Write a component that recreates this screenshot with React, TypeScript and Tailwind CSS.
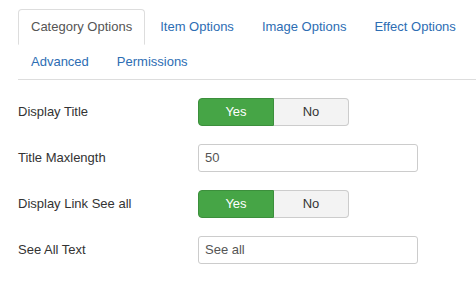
import React from 'react';

const tabsRow1 = ['Category Options', 'Item Options', 'Image Options', 'Effect Options'];
const tabsRow2 = ['Advanced', 'Permissions'];

function Tab({ label, active }: { label: string; active?: boolean }) {
  return (
    <li
      className={
        'mr-[2px] -mb-px border px-[12px] py-[8px] leading-[18px] rounded-t-[4px] ' +
        (active
          ? 'border-[#dddddd] border-b-white bg-white text-[#555555]'
          : 'border-transparent text-[#2d6db3]')
      }
    >
      {label}
    </li>
  );
}

function Toggle() {
  return (
    <div className="flex h-[28px]">
      <span className="flex w-[76px] items-center justify-center rounded-l-[4px] border border-[#3c8f3c] bg-[#46a546] text-white">
        Yes
      </span>
      <span className="flex w-[75px] items-center justify-center rounded-r-[4px] border border-l-0 border-[#cccccc] bg-[#f3f3f3] text-[#333333]">
        No
      </span>
    </div>
  );
}

function Field({ value }: { value: string }) {
  return (
    <div className="flex h-[28px] w-[220px] items-center rounded-[3px] border border-[#cccccc] bg-white px-[6px] text-[#555555]">
      {value}
    </div>
  );
}

const rows: { label: string; kind: 'toggle' | 'text'; value?: string }[] = [
  { label: 'Display Title', kind: 'toggle' },
  { label: 'Title Maxlength', kind: 'text', value: '50' },
  { label: 'Display Link See all', kind: 'toggle' },
  { label: 'See All Text', kind: 'text', value: 'See all' },
];

export default function App() {
  return (
    <div
      className="h-[286px] w-[476px] overflow-hidden bg-white pl-[18px] pt-[9px] text-[13px] text-[#333333]"
      style={{ fontFamily: '"Liberation Sans", Arial, sans-serif' }}
    >
      {/* Tabs */}
      <ul className="flex flex-wrap border-b border-[#dddddd]">
        {tabsRow1.map((t, i) => (
          <Tab key={t} label={t} active={i === 0} />
        ))}
        <li className="w-full" />
        {tabsRow2.map((t) => (
          <Tab key={t} label={t} />
        ))}
      </ul>

      {/* Form */}
      <div className="mt-[18px] flex flex-col gap-[18px]">
        {rows.map((r) => (
          <div key={r.label} className="flex items-center">
            <label className="w-[180px]">{r.label}</label>
            {r.kind === 'toggle' ? <Toggle /> : <Field value={r.value!} />}
          </div>
        ))}
      </div>
    </div>
  );
}
